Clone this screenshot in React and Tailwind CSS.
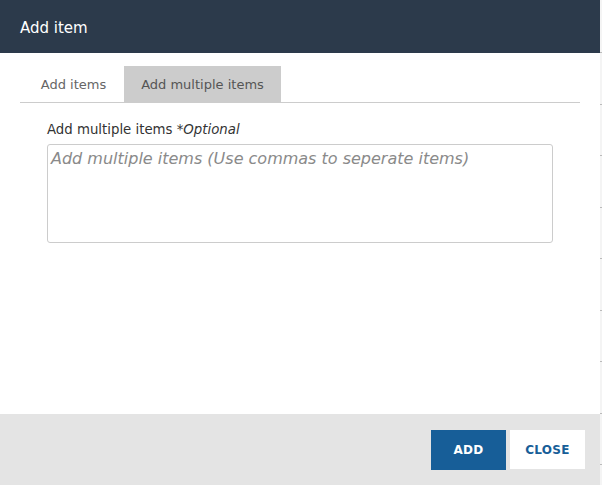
export default function App() {
  const font = { fontFamily: "'DejaVu Sans', 'Noto Sans', sans-serif" };
  return (
    <div className="flex w-[602px] h-[485px] bg-white overflow-hidden" style={font}>
      <div className="flex flex-col w-[600px] h-[485px]">
        <div className="h-[53px] shrink-0 bg-[#2c3a4b] flex items-center px-[20px] pt-[3px] text-white text-[15px]">
          Add item
        </div>
        <div className="flex-1 pt-[13px] pl-[20px] pr-[20px]">
          <div className="flex border-b border-[#cccccc] h-[37px]">
            <div className="w-[104px] h-[36px] flex items-center justify-center pl-[3px] pt-[2px] text-[13px] text-[#666]">
              Add items
            </div>
            <div className="w-[157px] h-[36px] flex items-center justify-center pt-[2px] text-[13px] text-[#555] bg-[#cccccc]">
              Add multiple items
            </div>
          </div>
          <div className="pl-[27px] pt-[19px]">
            <div className="text-[13.3px] text-[#333] leading-[16px]">
              Add multiple items <i>*Optional</i>
            </div>
            <textarea
              className="mt-[6px] block w-[506px] h-[99px] border border-[#cccccc] rounded-[3px] px-[3px] py-[2px] text-[16px] italic placeholder:text-[#8a8a8a] resize-none outline-none"
              placeholder="Add multiple items (Use commas to seperate items)"
              style={font}
            />
          </div>
        </div>
        <div className="h-[71px] shrink-0 bg-[#e4e4e4] flex items-center justify-end gap-[4px] pr-[15px]">
          <button className="w-[75px] h-[40px] bg-[#175e98] text-white text-[12px] font-bold tracking-[0.3px]">
            ADD
          </button>
          <button className="w-[75px] h-[39px] bg-white text-[#175e98] text-[12px] font-bold tracking-[0.3px]">
            CLOSE
          </button>
        </div>
      </div>
      <div className="w-[2px] h-[485px] bg-[#f4f4f4] flex flex-col">
        <div className="h-[53px] shrink-0 border-b border-[#bbbbbb]" />
        <div className="h-[51.5px] shrink-0 border-b border-[#bbbbbb]" />
        <div className="h-[51.5px] shrink-0 border-b border-[#bbbbbb]" />
        <div className="h-[51.5px] shrink-0 border-b border-[#bbbbbb]" />
        <div className="h-[51.5px] shrink-0 border-b border-[#bbbbbb]" />
        <div className="h-[51.5px] shrink-0 border-b border-[#bbbbbb]" />
        <div className="h-[51.5px] shrink-0 border-b border-[#bbbbbb]" />
        <div className="h-[51.5px] shrink-0 border-b border-[#bbbbbb]" />
        <div className="h-[51.5px] shrink-0 border-b border-[#bbbbbb]" />
      </div>
    </div>
  );
}
